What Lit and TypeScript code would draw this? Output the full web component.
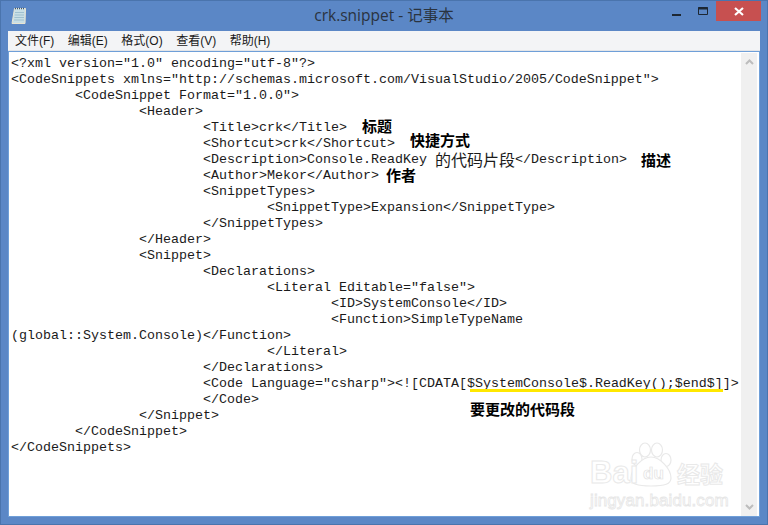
import { LitElement, html, css } from "lit";
import { customElement } from "lit/decorators.js";

const before = `<?xml version="1.0" encoding="utf-8"?>
<CodeSnippets xmlns="http://schemas.microsoft.com/VisualStudio/2005/CodeSnippet">
\t<CodeSnippet Format="1.0.0">
\t\t<Header>
\t\t\t<Title>crk</Title>
\t\t\t<Shortcut>crk</Shortcut>
\t\t\t<Description>Console.ReadKey `;
const after = `</Description>
\t\t\t<Author>Mekor</Author>
\t\t\t<SnippetTypes>
\t\t\t\t<SnippetType>Expansion</SnippetType>
\t\t\t</SnippetTypes>
\t\t</Header>
\t\t<Snippet>
\t\t\t<Declarations>
\t\t\t\t<Literal Editable="false">
\t\t\t\t\t<ID>SystemConsole</ID>
\t\t\t\t\t<Function>SimpleTypeName
(global::System.Console)</Function>
\t\t\t\t</Literal>
\t\t\t</Declarations>
\t\t\t<Code Language="csharp"><![CDATA[$SystemConsole$.ReadKey();$end$]]>
\t\t\t</Code>
\t\t</Snippet>
\t</CodeSnippet>
</CodeSnippets>`;

const menus = ["文件(F)", "编辑(E)", "格式(O)", "查看(V)", "帮助(H)"];

@customElement("app-root")
export class AppRoot extends LitElement {
  static styles = css`
    :host {
      display: flex;
      flex-direction: column;
      width: 768px;
      height: 525px;
      box-sizing: border-box;
      padding: 0 7px 7px;
      background: #5b87c6;
      border: 1px solid #4a74ad;
      font-family: "Noto Sans CJK SC", sans-serif;
      overflow: hidden;
    }
    .title {
      flex: none;
      height: 30px;
      display: grid;
      grid-template-columns: 1fr auto 1fr;
      align-items: start;
    }
    .icon { margin: 6px 0 0 3px; display: block; }
    .name {
      font-size: 15.5px;
      line-height: 28px;
      color: #2a3340;
      font-family: "Open Sans", "Noto Sans CJK SC", sans-serif;
    }
    .ctl {
      display: flex;
      justify-content: flex-end;
      align-items: flex-start;
      margin-right: -1px;
    }
    .min { width: 28px; height: 20px; display: flex; justify-content: center; }
    .min svg, .max svg { display: block; margin-top: 6px; }
    .max { width: 26px; height: 20px; display: flex; justify-content: center; }
    .close {
      width: 45px;
      height: 20px;
      background: #c75050;
      display: flex;
      justify-content: center;
      align-items: center;
    }
    .menu {
      flex: none;
      height: 20px;
      background: #f3f4f6;
      border-bottom: 1px solid #e3e5e8;
      display: flex;
      align-items: center;
      gap: 13.5px;
      padding: 0 0 2px 7px;
      font-size: 12px;
      color: #1a1a1a;
      box-sizing: border-box;
      font-family: "Liberation Sans", "Noto Sans CJK SC", sans-serif;
    }
    .body {
      flex: 1;
      min-height: 0;
      display: flex;
      background: #fff;
      border: 1px solid #6f9fd8;
      position: relative;
    }
    .text {
      flex: 1;
      margin: 0;
      padding: 4px 0 0 2px;
      font-family: "Liberation Mono", "Noto Sans CJK SC", monospace;
      font-size: 13.333px;
      line-height: 16px;
      tab-size: 8;
      white-space: pre;
      color: #1a1a1a;
      overflow: hidden;
    }
    .cjk {
      display: inline-block;
      height: 16px;
      vertical-align: top;
      font-family: "Noto Sans CJK SC", sans-serif;
      font-size: 16px;
      line-height: 15px;
    }
    .bar {
      flex: none;
      width: 16px;
      margin: 1px 2px 0 0;
      background: #f0f0f0;
      display: flex;
      flex-direction: column;
      justify-content: space-between;
      align-items: center;
      padding: 6px 0;
      box-sizing: border-box;
    }
    .note {
      position: absolute;
      font-weight: 700;
      font-size: 15px;
      line-height: 16px;
      color: #000;
      white-space: nowrap;
    }
    .line { position: absolute; left: 461px; top: 337px; width: 253px; height: 3px; background: #ffe800; }
    .mark { position: absolute; left: 581px; top: 390px; width: 140px; height: 70px; }
    .mark svg { position: absolute; left: 0; top: 0; }
    .wm-b { position: absolute; left: 0; top: 16px; font: 700 31px/30px "Liberation Sans", sans-serif; color: #fff; -webkit-text-stroke: 1px #e9e9e9; }
    .wm-d { position: absolute; left: 53px; top: 24px; font: 700 17px/16px "Liberation Sans", sans-serif; color: #fff; -webkit-text-stroke: .7px #e2e2e2; }
    .wm-c { position: absolute; left: 87px; top: 17px; font: 700 23px/28px "Noto Sans CJK SC", sans-serif; color: #fff; -webkit-text-stroke: 1px #e9e9e9; }
    .wm-u { position: absolute; left: 0; top: 49px; font: 400 17px/20px "Liberation Sans", sans-serif; color: #fff; -webkit-text-stroke: 0.8px #e6e6e6; letter-spacing: .1px; }
  `;

  render() {
    const notes: [string, number, number][] = [
      ["标题", 353, 66],
      ["快捷方式", 401, 80],
      ["描述", 632, 100],
      ["作者", 377, 115],
      ["要更改的代码段", 461, 349],
    ];
    return html`
      <div class="title">
        <svg class="icon" width="16" height="18" viewBox="0 0 16 18">
          <path d="M3.5 1.5h11l-.5 15H1z" fill="#c9dfe6" stroke="#e9e4d2"/>
          <path d="M4 1.5h10" stroke="#3f5872" stroke-dasharray="1 1" stroke-width="1.5"/>
          <path d="M4 5.5h9M3.7 8h9.3M3.4 10.5h9.6M3.1 13h10" stroke="#9fc0cf"/>
        </svg>
        <div class="name">crk.snippet - 记事本</div>
        <div class="ctl">
          <div class="min"><svg width="9" height="9" viewBox="0 0 9 9"><path d="M0 8h9" stroke="#1d2733" stroke-width="2"/></svg></div>
          <div class="max"><svg width="11" height="9" viewBox="0 0 11 9"><path d="M.5.5h9v7h-9z" fill="none" stroke="#1d2733"/><path d="M0 1.5h10" stroke="#1d2733" stroke-width="2"/></svg></div>
          <div class="close"><svg width="10" height="9" viewBox="0 0 10 9"><path d="M1 1l8 7M9 1l-8 7" stroke="#fff" stroke-width="2.2"/></svg></div>
        </div>
      </div>
      <div class="menu">${menus.map((m) => html`<span>${m}</span>`)}</div>
      <div class="body">
        <pre class="text">${before}<span class="cjk">的代码片段</span>${after}</pre>
        <div class="bar">
          <svg width="9" height="6" viewBox="0 0 9 6"><path d="M1 5l3.5-3.5L8 5" fill="none" stroke="#bdbdbd" stroke-width="2"/></svg>
          <svg width="9" height="6" viewBox="0 0 9 6"><path d="M1 1l3.5 3.5L8 1" fill="none" stroke="#bdbdbd" stroke-width="2"/></svg>
        </div>
        ${notes.map(([t, x, y]) => html`<div class="note" style="left:${x}px;top:${y}px">${t}</div>`)}
        <div class="line"></div>
        <div class="mark">
          <svg width="90" height="50" viewBox="0 0 90 50" fill="#fff" stroke="#e9e9e9" stroke-width="1.2">
            <ellipse cx="55" cy="8" rx="5.5" ry="7"/>
            <ellipse cx="67" cy="8" rx="5.5" ry="7"/>
            <ellipse cx="47" cy="17" rx="5" ry="6.5"/>
            <ellipse cx="76" cy="18" rx="5" ry="6.5"/>
            <path d="M61 15c9 0 20 12 20 21 0 6-6 8-20 8s-20-2-20-8c0-9 11-21 20-21z"/>
          </svg>
          <div class="wm-b">Bai</div>
          <div class="wm-d">du</div>
          <div class="wm-c">经验</div>
          <div class="wm-u">jingyan.baidu.com</div>
        </div>
      </div>
    `;
  }
}
